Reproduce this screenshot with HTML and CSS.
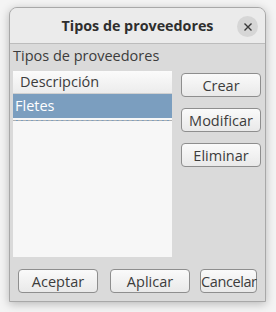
FILE: index.html
```html
<!DOCTYPE html>
<html lang="es">
<head>
  <meta charset="UTF-8" />
  <title>Tipos de proveedores</title>
  <link rel="stylesheet" href="styles.css">
</head>
<body>

  <div class="window">
    <!-- barra de titulo -->
    <div class="titlebar">
      <span class="title">Tipos de proveedores</span>
      <button class="close" aria-label="Cerrar">
        <svg width="10" height="10" viewBox="0 0 10 10">
          <path d="M1.5 1.5 L8.5 8.5 M8.5 1.5 L1.5 8.5" stroke="#3a3a3a" stroke-width="1.4" fill="none" />
        </svg>
      </button>
    </div>

    <div class="content">
      <div class="label">Tipos de proveedores</div>

      <div class="main">
        <div class="list">
          <div class="list-header">Descripción</div>
          <div class="list-row selected">Fletes</div>
        </div>
        <div class="side-buttons">
          <button class="btn">Crear</button>
          <button class="btn">Modificar</button>
          <button class="btn">Eliminar</button>
        </div>
      </div>

      <div class="footer">
        <button class="btn wide">Aceptar</button>
        <button class="btn wide">Aplicar</button>
        <button class="btn narrow">Cancelar</button>
      </div>
    </div>
  </div>

</body>
</html>
```

FILE: styles.css
```css
* {
  box-sizing: border-box;
}
body, html {
  margin: 0;
  padding: 0;
  height: 100%;
  background: #f4f4f4;
  font-family: 'Open Sans', 'DejaVu Sans', sans-serif;
  color: #3c3c3c;
  overflow: hidden;
}
.window {
  margin: 7px 0 0 9px;
  width: 257px;
  height: 295px;
  background: #dadada;
  border: 1px solid #a8a8a8;
  border-radius: 8px 8px 0 0;
  box-shadow: 0 2px 10px rgba(0, 0, 0, 0.25);
  display: flex;
  flex-direction: column;
}
.titlebar {
  height: 36px;
  background: #ebebeb;
  border-bottom: 1px solid #bcbcbc;
  border-radius: 7px 7px 0 0;
  display: flex;
  align-items: center;
  justify-content: center;
  position: relative;
}
.title {
  font-weight: bold;
  font-size: 14.3px;
  color: #2e2e2e;
}
.close {
  position: absolute;
  right: 7px;
  top: 8px;
  width: 21px;
  height: 21px;
  border: none;
  border-radius: 50%;
  background: #d6d6d6;
  padding: 0;
  display: flex;
  align-items: center;
  justify-content: center;
}
.content {
  flex: 1;
  padding: 2px 4px 0 3px;
  display: flex;
  flex-direction: column;
}
.label {
  font-size: 14.5px;
  height: 25px;
  line-height: 20px;
}
.main {
  display: flex;
  gap: 9px;
}
.list {
  width: 159px;
  height: 186px;
  background: #f7f7f7;
}
.list-header {
  height: 23px;
  line-height: 22px;
  padding-left: 7px;
  font-size: 14.5px;
  background: linear-gradient(#fbfbfb, #ececec);
  border-bottom: 1px solid #d0d0d0;
}
.list-row {
  height: 27px;
  line-height: 23px;
  padding-left: 2px;
  font-size: 14.5px;
  border-bottom: 1px dashed #b0b0b0;
}
.list-row.selected {
  background: linear-gradient(#7b9ebf 24px, transparent 24px);
  color: #ffffff;
}
.side-buttons {
  display: flex;
  flex-direction: column;
  gap: 11px;
  padding-top: 2px;
}
.btn {
  height: 24px;
  width: 80px;
  padding: 0;
  border: 1px solid #8e8e8e;
  border-radius: 4px;
  background: linear-gradient(#fafafa, #e9e9e9);
  font-family: inherit;
  font-size: 14.5px;
  color: #3c3c3c;
}
.footer {
  display: flex;
  padding: 12px 0 0 5px;
}
.footer .btn.wide {
  margin-right: 12px;
}
.footer .btn.narrow {
  width: 57px;
  margin-left: -2px;
  white-space: nowrap;
  letter-spacing: -0.4px;
}
```
